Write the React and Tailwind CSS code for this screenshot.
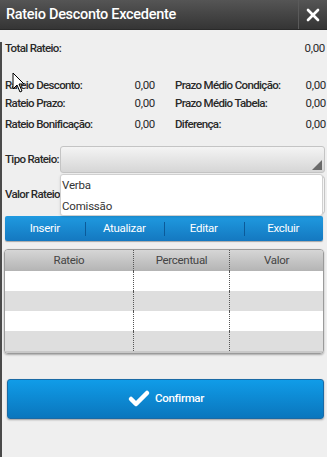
import { Check, X } from 'lucide-react';

const font = { fontFamily: 'Roboto, "Liberation Sans", sans-serif' };

function InfoRow({ label, value, label2, value2, className = '' }) {
  return (
    <div className={`flex items-center h-[14px] text-[11.5px] text-[#2a2a2a] ${className}`}>
      <span className="shrink-0 w-[125px] pl-[3px] font-medium tracking-[-0.65px] whitespace-nowrap">{label}</span>
      <span className="shrink-0 w-[28px] text-right tracking-[-0.3px]">{value}</span>
      <span className="shrink-0 ml-[20px] w-[130px] font-medium tracking-[-0.65px] whitespace-nowrap">{label2}</span>
      <span className="flex-1 text-right pr-[1px] tracking-[-0.3px]">{value2}</span>
    </div>
  );
}

const rows = ['bg-white', 'bg-[#dedede]', 'bg-white', 'bg-[#dedede]'];

export default function App() {
  return (
    <div className="relative w-[327px] h-[457px] bg-[#efefef] overflow-hidden" style={font}>
      {/* title bar */}
      <div className="flex h-[30px] bg-gradient-to-b from-[#555555] to-[#353535] border-b border-[#2a2a2a]">
        <div className="flex-1 flex items-center pl-[6px] text-white text-[14.5px] font-medium tracking-[-0.3px] whitespace-nowrap">
          Rateio Desconto Excedente
        </div>
        <div className="w-[29px] flex items-center justify-center border-l border-[#5a5a5a]">
          <X size={20} strokeWidth={3.2} className="text-white" />
        </div>
      </div>

      <div className="h-[427px] border-l-2 border-[#4a4a4a]">
        <div className="flex items-center justify-between h-[14px] mt-[12px] text-[11.5px] text-[#2a2a2a]">
          <span className="pl-[3px] font-medium tracking-[-0.65px]">Total Rateio:</span>
          <span className="pr-[2px] tracking-[-0.3px]">0,00</span>
        </div>

        <InfoRow className="mt-[23px]" label="Rateio Desconto:" value="0,00" label2="Prazo Médio Condição:" value2="0,00" />
        <InfoRow className="mt-[4px]" label="Rateio Prazo:" value="0,00" label2="Prazo Médio Tabela:" value2="0,00" />
        <InfoRow className="mt-[7px]" label="Rateio Bonificação:" value="0,00" label2="Diferença:" value2="0,00" />

        {/* tipo rateio */}
        <div className="flex items-center mt-[14px] h-[27px]">
          <span className="shrink-0 w-[58px] pl-[3px] text-[11.5px] font-medium text-[#2a2a2a] tracking-[-0.65px] whitespace-nowrap">Tipo Rateio:</span>
          <div className="relative flex-1 h-[27px] mr-[2px] rounded-[3px] border border-[#c4c4c4] bg-gradient-to-b from-[#f4f4f4] to-[#d6d6d6]">
            <svg className="absolute right-[2px] bottom-[2px]" width="10" height="10" viewBox="0 0 10 10">
              <polygon points="10,0 10,10 0,10" fill="#6a6a6a" />
            </svg>
          </div>
        </div>

        {/* valor rateio + open dropdown */}
        <div className="relative flex items-center mt-[3px] h-[38px]">
          <span className="shrink-0 w-[58px] pl-[3px] text-[11.5px] font-medium text-[#2a2a2a] tracking-[-0.65px] whitespace-nowrap">Valor Rateio:</span>
          <div className="flex-1 h-[38px] mr-[2px] rounded-[3px] border border-[#c8c8c8] bg-white" />
          <div className="absolute left-[58px] right-[4px] top-[-2px] h-[42px] bg-white rounded-[3px] border border-[#d0d0d0] shadow-sm text-[11.5px] text-[#333] tracking-[-0.2px]">
            <div className="h-[21px] flex items-center pl-[1px] pt-[1px]">Verba</div>
            <div className="h-[21px] flex items-center pl-[1px]">Comissão</div>
          </div>
        </div>

        {/* action bar */}
        <div className="flex h-[25px] mt-[2px] ml-[3px] mr-[4px] rounded-[2px] bg-gradient-to-b from-[#209ae0] to-[#1478c0] text-white text-[11.5px] tracking-[-0.3px] shadow-[0_1px_1px_rgba(0,0,0,0.3)]">
          {['Inserir', 'Atualizar', 'Editar', 'Excluir'].map((t, i) => (
            <div key={t} className="flex-1 flex items-center relative">
              {i > 0 && <span className="absolute left-0 top-[6px] h-[14px] w-px bg-[#0b5a99]" />}
              <span className="flex-1 text-center">{t}</span>
            </div>
          ))}
        </div>

        {/* table */}
        <div className="mt-[8px] ml-[2px] mr-[3px] rounded-[4px] border border-[#9a9a9a] overflow-hidden shadow-[0_1px_2px_rgba(0,0,0,0.3)]">
          <div className="flex h-[21px] bg-gradient-to-b from-[#d6d6d6] to-[#b4b4b4] text-[11.5px] text-[#444] tracking-[-0.3px]">
            <div className="w-[129px] flex items-center justify-center border-r border-dotted border-[#555]">Rateio</div>
            <div className="w-[96px] flex items-center justify-center border-r border-dotted border-[#555]">Percentual</div>
            <div className="flex-1 flex items-center justify-center">Valor</div>
          </div>
          {rows.map((c, i) => (
            <div key={i} className={`flex h-[20px] ${c}`}>
              <div className="w-[129px] border-r border-dotted border-[#555]" />
              <div className="w-[96px] border-r border-dotted border-[#555]" />
              <div className="flex-1" />
            </div>
          ))}
          <div className="h-[2px] bg-[#c8c8c8]" />
        </div>

        {/* confirmar */}
        <div className="flex items-center justify-center gap-[4px] mt-[25px] ml-[5px] mr-[3px] h-[40px] rounded-[3px] border border-[#1a6aa5] bg-gradient-to-b from-[#109ce8] to-[#0a76bd] text-white text-[11.5px] font-medium tracking-[-0.3px] shadow-[0_1px_2px_rgba(0,0,0,0.35)]">
          <Check size={24} strokeWidth={4.5} />
          <span>Confirmar</span>
        </div>
      </div>

      {/* mouse cursor */}
      <svg className="absolute left-[12px] top-[72px]" width="13" height="22" viewBox="0 0 13 22">
        <path d="M1 1 L1 17 L5 13 L8 20 L10 19 L7 12 L12 12 Z" fill="white" stroke="black" strokeWidth="1" strokeLinejoin="round" />
      </svg>
    </div>
  );
}
